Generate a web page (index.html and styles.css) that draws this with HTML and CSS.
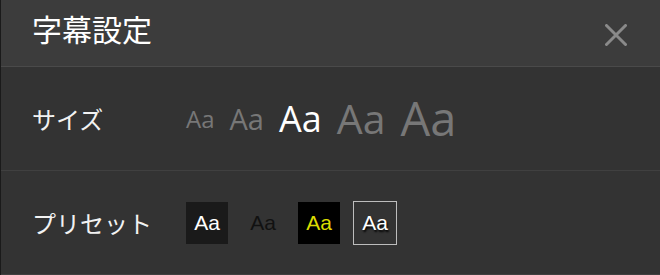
FILE: index.html
```html
<!DOCTYPE html>
<html lang="ja">
<head>
    <meta charset="UTF-8">
    <meta name="viewport" content="width=device-width, initial-scale=1.0">
    <title>字幕設定</title>
    <link rel="stylesheet" href="styles.css">
</head>
<body>
    <div class="panel">
        <div class="panel-header">
            <h1 class="panel-title">字幕設定</h1>
            <button class="close-btn" aria-label="閉じる">
                <svg width="22" height="22" viewBox="0 0 22 22">
                    <path d="M1.5 1.5 L20.5 20.5 M20.5 1.5 L1.5 20.5" stroke="#8a8a8a" stroke-width="3" stroke-linecap="round" fill="none"/>
                </svg>
            </button>
        </div>

        <div class="setting-row">
            <div class="setting-label">サイズ</div>
            <div class="size-list">
                <span class="size-item size-1">Aa</span>
                <span class="size-item size-2">Aa</span>
                <span class="size-item size-3 selected">Aa</span>
                <span class="size-item size-4">Aa</span>
                <span class="size-item size-5">Aa</span>
            </div>
        </div>

        <div class="setting-row">
            <div class="setting-label">プリセット</div>
            <div class="preset-list">
                <span class="preset preset-dark">Aa</span>
                <span class="preset preset-clear">Aa</span>
                <span class="preset preset-yellow">Aa</span>
                <span class="preset preset-outline selected">Aa</span>
            </div>
        </div>
    </div>
</body>
</html>
```

FILE: styles.css
```css
body {
    margin: 0;
    background-color: #333333;
    font-family: "Noto Sans CJK JP", "Noto Sans", sans-serif;
    color: #ffffff;
}
.panel {
    height: 275px;
    border-left: 1px solid #1a1a1a;
    box-sizing: border-box;
    overflow: hidden;
}
.panel-header {
    height: 67px;
    box-sizing: border-box;
    background-color: #3c3c3c;
    border-bottom: 1px solid #4a4a4a;
    display: flex;
    justify-content: space-between;
    align-items: flex-start;
    padding: 0 33px 0 31px;
}
.panel-title {
    margin: 0;
    padding-top: 13px;
    font-size: 30px;
    font-weight: 400;
    line-height: 30px;
    color: #ffffff;
}
.close-btn {
    margin-top: 24px;
    padding: 0;
    border: none;
    background: none;
    cursor: pointer;
    line-height: 0;
}
.setting-row {
    height: 104px;
    box-sizing: border-box;
    border-bottom: 1px solid #404040;
    display: flex;
    align-items: center;
    padding-left: 31px;
}
.setting-label {
    width: 154px;
    font-size: 24px;
    color: #f2f2f2;
}
.size-list {
    display: flex;
    align-items: center;
    gap: 15px;
    font-family: "Open Sans", "Noto Sans", sans-serif;
    color: #777777;
}
.size-item {
    line-height: 1;
    cursor: pointer;
}
.size-1 { font-size: 24px; }
.size-2 { font-size: 29px; }
.size-3 { font-size: 36px; }
.size-4 { font-size: 41px; }
.size-5 { font-size: 47px; }
.size-item.selected {
    color: #ffffff;
}
.preset-list {
    display: flex;
    gap: 14px;
}
.preset {
    width: 42px;
    height: 42px;
    display: flex;
    align-items: center;
    justify-content: center;
    font-family: "Liberation Sans", Arial, sans-serif;
    font-size: 21px;
    cursor: pointer;
}
.preset-dark {
    background-color: #1a1a1a;
    color: #ffffff;
}
.preset-clear {
    color: #111111;
}
.preset-yellow {
    background-color: #000000;
    color: #dcdc00;
}
.preset-outline {
    color: #ffffff;
    text-shadow: 1px 2px 2px #000000;
}
.preset.selected {
    outline: 1px solid #bdbdbd;
}
```
